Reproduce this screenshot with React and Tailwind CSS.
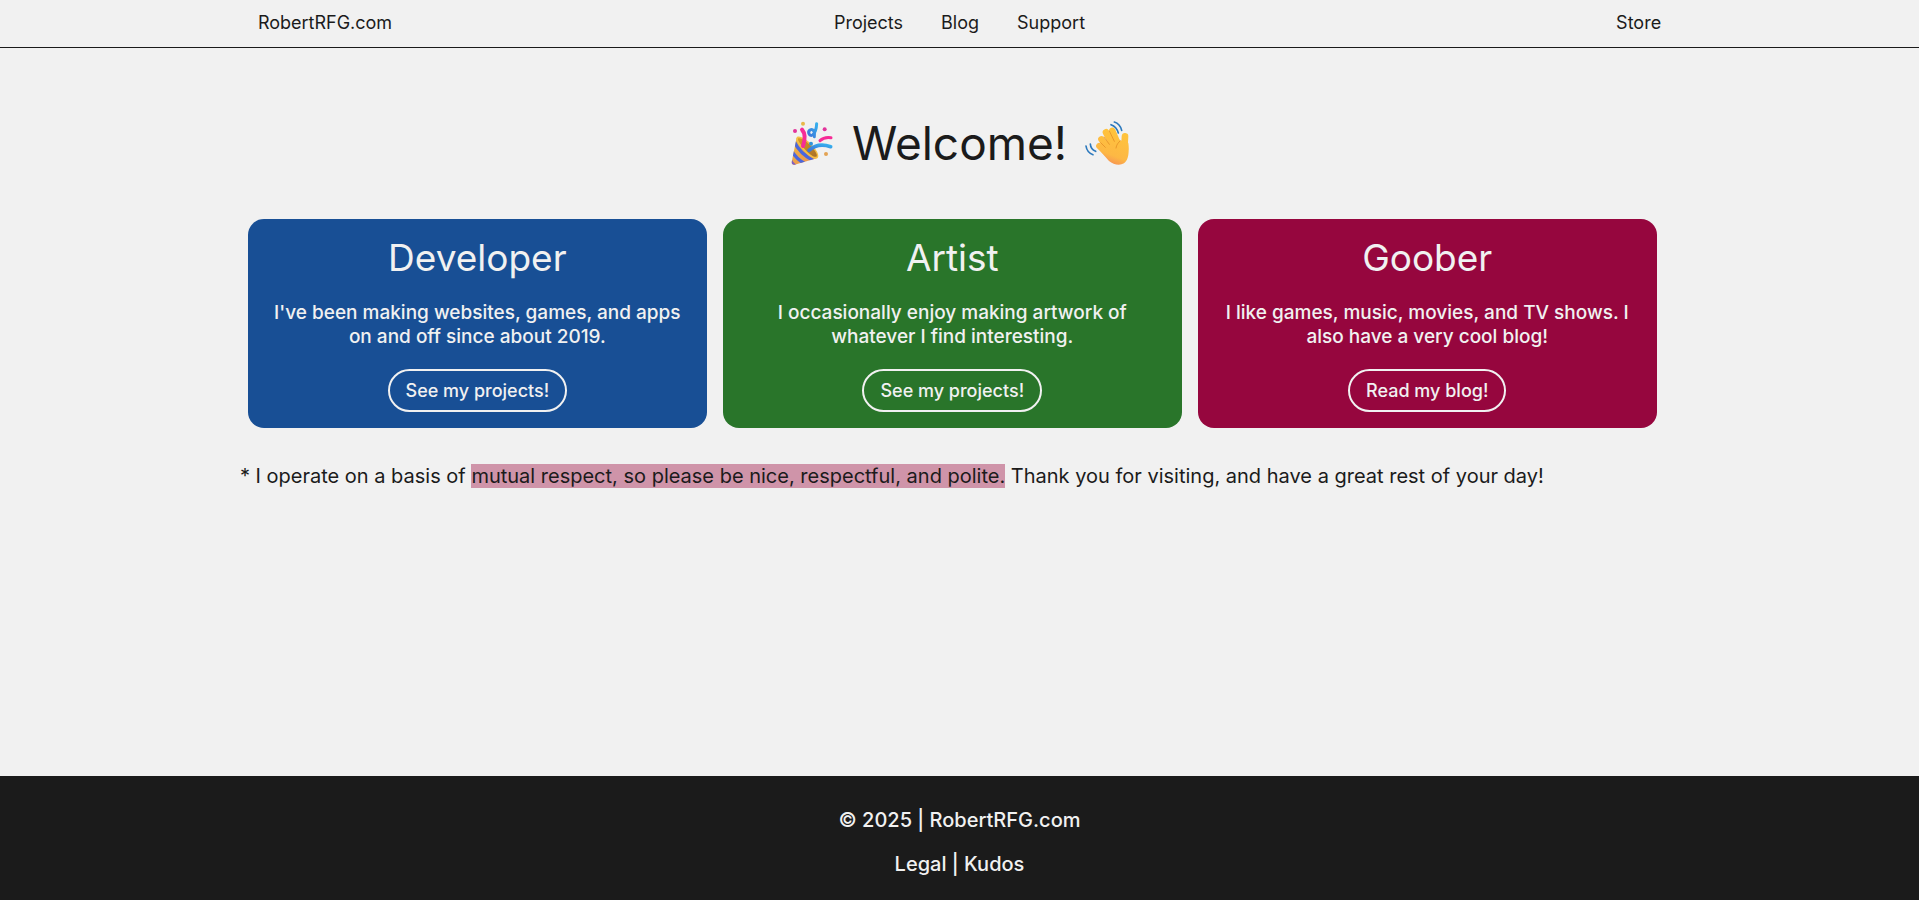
const cards = [
  {
    title: "Developer",
    text: "I've been making websites, games, and apps on and off since about 2019.",
    action: "See my projects!",
    color: "bg-[#184f95]",
  },
  {
    title: "Artist",
    text: "I occasionally enjoy making artwork of whatever I find interesting.",
    action: "See my projects!",
    color: "bg-[#29752a]",
  },
  {
    title: "Goober",
    text: "I like games, music, movies, and TV shows. I also have a very cool blog!",
    action: "Read my blog!",
    color: "bg-[#96063e]",
  },
];

function PartyPopper() {
  return (
    <svg className="size-11" viewBox="32 33 132 132" role="img" aria-label="Party popper">
      <defs>
        <linearGradient id="cone" x1="0" y1="0" x2="1" y2="1">
          <stop offset="0" stopColor="#f2bd3c" />
          <stop offset="1" stopColor="#e8875a" />
        </linearGradient>
        <linearGradient id="mouth" x1="0" y1="0" x2="1" y2="1">
          <stop offset="0" stopColor="#d99a22" />
          <stop offset="1" stopColor="#a8702a" />
        </linearGradient>
        <linearGradient id="blue" x1="0" y1="1" x2="1" y2="0">
          <stop offset="0" stopColor="#3f74d8" />
          <stop offset="1" stopColor="#35b0ee" />
        </linearGradient>
        <clipPath id="coneClip">
          <path d="M52 83 L37 156 Q36 165 46 164 L112 145 Q90 132 76 116 Q62 100 52 83Z" />
        </clipPath>
      </defs>
      <g clipPath="url(#coneClip)">
        <rect x="32" y="80" width="90" height="90" fill="url(#cone)" />
        <g fill="none" stroke="#4a66dd" strokeWidth="10">
          <path d="M44 94 Q62 132 104 153" />
          <path d="M36 121 Q49 146 78 162" />
          <path d="M32 146 Q38 160 52 170" stroke="#7d5fc4" strokeWidth="7" />
        </g>
      </g>
      <path d="M53 81 C61 75 85 89 101 108 C115 124 121 139 114 145 C105 150 84 136 69 117 C55 100 47 87 53 81Z" fill="#f4bf45" />
      <path d="M57 85 C65 82 83 94 97 110 C110 125 116 136 111 140 C103 143 87 131 73 114 C60 99 53 88 57 85Z" fill="url(#mouth)" />
      <path d="M68 59 Q82 75 71 108" fill="none" stroke="#f62c96" strokeWidth="12" strokeLinecap="round" />
      <path d="M89 121 Q115 97 154 110" fill="none" stroke="url(#blue)" strokeWidth="11" strokeLinecap="round" />
      <path d="M122 92 Q134 80 155 83" fill="none" stroke="#f62c96" strokeWidth="9" strokeLinecap="round" />
      <path d="M112 41 Q111 64 101 74 C92 82 83 67 92 60 C101 55 108 65 105 80" fill="none" stroke="url(#blue)" strokeWidth="9" strokeLinecap="round" />
      <circle cx="71" cy="41" r="6" fill="#e8b84a" />
      <circle cx="47" cy="63" r="6" fill="#e2339a" />
      <circle cx="136" cy="58" r="6" fill="#e2339a" />
      <circle cx="140" cy="132" r="6" fill="#e3a354" />
      <circle cx="95" cy="101" r="6" fill="#2f94dc" />
    </svg>
  );
}

function WavingHand() {
  return (
    <svg className="size-11" viewBox="41 33 132 132" role="img" aria-label="Waving hand">
      <defs>
        <linearGradient id="skin" gradientUnits="userSpaceOnUse" x1="145" y1="60" x2="105" y2="165">
          <stop offset="0" stopColor="#ffc43c" />
          <stop offset="0.7" stopColor="#fdb844" />
          <stop offset="1" stopColor="#f58a58" />
        </linearGradient>
      </defs>
      <g fill="none" stroke="url(#skin)" strokeLinecap="round">
        <path d="M84 108 L118 140" strokeWidth="19" />
        <path d="M90 88 L122 128" strokeWidth="19" />
        <path d="M104 67 L130 116" strokeWidth="20" />
        <path d="M123 62 L144 112" strokeWidth="19" />
        <path d="M161 79 Q159 96 161 116" strokeWidth="20" />
      </g>
      <path
        d="M78 113 L96 102 L112 92 L134 84 L145 89 C148 95 151 94 153 87 L171 100 C174 130 171 151 158 160 C145 168 126 164 113 153Z"
        fill="url(#skin)"
      />
      <g fill="none" stroke="#e38c24" strokeLinecap="round" strokeWidth="3" opacity="0.75">
        <path d="M88 98 L102 112" />
        <path d="M98 81 L114 103" />
        <path d="M114 63 L129 94" />
        <path d="M147 92 C141 98 135 104 134 114" />
      </g>
      <g fill="none" stroke="#2c79bd" strokeWidth="5" strokeLinecap="round">
        <path d="M119 44 Q136 50 141 69" />
        <path d="M129 36 Q146 41 151 61" />
        <path d="M57 102 Q58 118 73 124" />
        <path d="M44 108 Q47 128 65 134" />
      </g>
    </svg>
  );
}

export default function App() {
  return (
    <div className="flex min-h-screen flex-col bg-[#f1f1f1] font-['Inter',sans-serif] text-[18px] leading-6 text-[#1b1b1b]">
      <header className="border-b border-[#1b1b1b]">
        <nav className="mx-auto grid w-3/4 grid-cols-[1fr_auto_1fr] items-center px-[18px] pt-[11px] pb-3">
          <a href="#home" className="justify-self-start">RobertRFG.com</a>
          <div className="flex gap-[38px]">
            <a href="#projects">Projects</a>
            <a href="#blog">Blog</a>
            <a href="#support">Support</a>
          </div>
          <a href="#store" className="justify-self-end">Store</a>
        </nav>
      </header>

      <main className="mx-auto w-3/4 grow">
        <div className="flex items-center justify-center gap-[18px] pt-[66px] pb-[47px]">
          <PartyPopper />
          <h1 className="text-[46px] leading-[58px]">Welcome!</h1>
          <WavingHand />
        </div>

        <div className="flex">
          {cards.map((card) => (
            <div key={card.title} className="flex w-[33%] px-2">
              <section className={`flex w-full flex-col items-center rounded-2xl p-4 text-center text-[#f1f1f1] ${card.color}`}>
                <h2 className="text-[37px] leading-[46px]">{card.title}</h2>
                <p className="mt-5 text-[19px] font-medium">{card.text}</p>
                <button type="button" className="mt-5 rounded-full border-2 border-[#f1f1f1] px-4 py-2 leading-[23px] font-medium">
                  {card.action}
                </button>
              </section>
            </div>
          ))}
        </div>

        <p className="mt-9 text-[20px]">
          * I operate on a basis of{" "}
          <mark className="bg-[#cf94a9] text-inherit">mutual respect, so please be nice, respectful, and polite.</mark>{" "}
          Thank you for visiting, and have a great rest of your day!
        </p>
      </main>

      <footer className="flex flex-col items-center gap-5 bg-[#1b1b1b] pt-8 pb-6 text-[20px] font-medium text-[#f1f1f1]">
        <p>© 2025 | RobertRFG.com</p>
        <p>
          <a href="#legal">Legal</a> | <a href="#kudos">Kudos</a>
        </p>
      </footer>
    </div>
  );
}
